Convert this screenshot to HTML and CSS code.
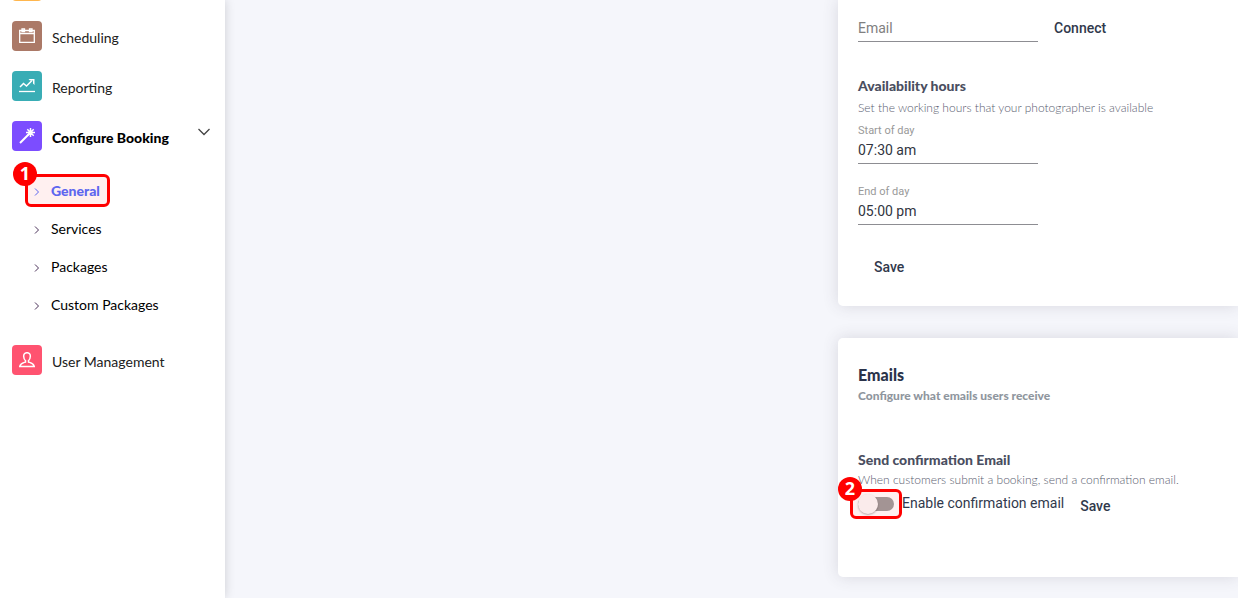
FILE: index.html
```html
<!DOCTYPE html>
<html lang="en">
<head>
<meta charset="utf-8">
<title>Configure Booking</title>
<link rel="stylesheet" href="styles.css">
</head>
<body>
<div class="app">
  <nav class="sidebar">
    <div class="nav-row"><span class="tile tile-orange"></span></div>
    <a class="nav-row" href="#">
      <span class="tile tile-brown">
        <svg viewBox="0 0 16 16"><path d="M.7 2.500h14.600v11.800H.7zM.7 5.500h14.600"/><path d="M3 1h2.500v2.500H3zM10.500 1H13v2.500h-2.500z"/></svg>
      </span>
      <span class="nav-label">Scheduling</span>
    </a>
    <a class="nav-row" href="#">
      <span class="tile tile-teal">
        <svg viewBox="0 0 16 16"><path class="thick" d="M1 9l3.500-3.500 3 2.500L13 2.500"/><path d="M0 13.500h16"/><path class="solid" d="M9.500 1h6v6l-1.500-1.500v-3h-3z"/></svg>
      </span>
      <span class="nav-label">Reporting</span>
    </a>
    <a class="nav-row" href="#">
      <span class="tile tile-violet">
        <svg viewBox="0 0 16 16"><path class="wand" d="M1 15L10.500 5.500"/><path class="thick" d="M11.500 0v9M7 4.500h9M8.300 1.300l6.400 6.400M14.700 1.300L8.300 7.700"/></svg>
      </span>
      <span class="nav-label nav-label-active">Configure Booking</span>
      <svg class="chevron" viewBox="0 0 12 8"><path d="M.5 1L6 6.500 11.500 1"/></svg>
    </a>
    <div class="submenu">
      <a class="sub-row sub-row-active" href="#">
        <svg class="arrow" viewBox="0 0 6 8"><path d="M1 .5L4.500 4 1 7.500"/></svg><span>General</span>
        <span class="callout callout-general"><span class="badge">1</span></span>
      </a>
      <a class="sub-row" href="#"><svg class="arrow" viewBox="0 0 6 8"><path d="M1 .5L4.500 4 1 7.500"/></svg><span>Services</span></a>
      <a class="sub-row" href="#"><svg class="arrow" viewBox="0 0 6 8"><path d="M1 .5L4.500 4 1 7.500"/></svg><span>Packages</span></a>
      <a class="sub-row" href="#"><svg class="arrow" viewBox="0 0 6 8"><path d="M1 .5L4.500 4 1 7.500"/></svg><span>Custom Packages</span></a>
    </div>
    <a class="nav-row" href="#">
      <span class="tile tile-pink">
        <svg viewBox="0 0 16 16"><path class="thick" d="M8 .7C5.800.7 4.500 2 4.700 4.500 4.800 6.500 5.500 8 6.500 8.600V10C4.500 10.800 1.500 11.200.7 14.500H15.300C14.500 11.200 11.500 10.800 9.500 10V8.600C10.500 8 11.200 6.500 11.300 4.500 11.500 2 10.200.7 8 .7z"/></svg>
      </span>
      <span class="nav-label">User Management</span>
    </a>
  </nav>
  <main class="content">
    <section class="card card-calendar">
      <form class="connect">
        <input class="field" type="email" placeholder="Email" aria-label="Email">
        <button class="button" type="button">Connect</button>
      </form>
      <h3 class="heading">Availability hours</h3>
      <p class="hint">Set the working hours that your photographer is available</p>
      <form class="hours">
        <div class="group">
          <label class="label" for="start">Start of day</label>
          <input class="field" id="start" type="text" value="07:30 am">
        </div>
        <div class="group">
          <label class="label" for="end">End of day</label>
          <input class="field" id="end" type="text" value="05:00 pm">
        </div>
        <button class="button" type="button">Save</button>
      </form>
    </section>
    <section class="card card-emails">
      <h2 class="title">Emails</h2>
      <p class="subtitle">Configure what emails users receive</p>
      <h3 class="heading">Send confirmation Email</h3>
      <p class="hint">When customers submit a booking, send a confirmation email.</p>
      <div class="setting">
        <span class="switch-wrap">
          <input class="switch" id="confirm" type="checkbox">
          <span class="callout callout-switch"><span class="badge">2</span></span>
        </span>
        <label class="switch-label" for="confirm">Enable confirmation email</label>
        <button class="button" type="button">Save</button>
      </div>
    </section>
  </main>
</div>
</body>
</html>
```
FILE: styles.css
```css
* { box-sizing: border-box; }
body {
  margin: 0;
  background: #f5f6fb;
  font-family: Lato, "Liberation Sans", sans-serif;
  overflow: hidden;
}
h2, h3, p { margin: 0; }
.app { display: flex; height: 100vh; overflow: hidden; }

.sidebar {
  flex: 0 0 225px;
  background: #fff;
  box-shadow: 0 0 10px rgba(0, 0, 0, 0.16);
}
.sidebar > :first-child { margin-top: -39px; }
.nav-row {
  display: flex;
  align-items: center;
  height: 50px;
  padding: 0 15px 0 12px;
  color: #212121;
  font-size: 14px;
  text-decoration: none;
}
.tile {
  display: grid;
  place-items: center;
  width: 30px;
  height: 30px;
  border-radius: 4px;
}
.tile svg { width: 16px; height: 16px; fill: none; stroke: #fff; stroke-width: 1.300; }
.tile .thick { stroke-width: 1.500; }
.tile .wand { stroke-width: 2; }
.tile .solid { fill: #fff; stroke: none; }
.tile-orange { background: #ffb64d; }
.tile-brown { background: #ab7967; }
.tile-teal { background: #39adb5; }
.tile-violet { background: #7c4dff; }
.tile-pink { background: #ff5370; }
.nav-label { flex: 1; padding: 2px 0 0 10px; }
.nav-label-active { color: #000; font-weight: 900; }
.chevron { width: 12px; height: 8px; margin-bottom: 8px; fill: none; stroke: #444; stroke-width: 1.300; }

.submenu { padding: 11px 0; }
.sub-row {
  position: relative;
  display: flex;
  align-items: center;
  gap: 11px;
  height: 38px;
  padding-left: 34px;
  color: #000;
  font-size: 14px;
  text-decoration: none;
}
.sub-row > span:not(.callout) { padding-bottom: 1px; }
.sub-row-active { color: #536dfe; font-weight: 900; }
.arrow { width: 6px; height: 8px; margin-top: 2px; fill: none; stroke: #4a3058; }
.sub-row-active .arrow { stroke: #536dfe; }

.callout {
  position: absolute;
  border: 3px solid #f00;
  border-radius: 6px;
  background: rgba(255, 0, 0, 0.06);
  pointer-events: none;
}
.callout-general { left: 25px; top: 2px; width: 85px; height: 33px; }
.callout-switch { left: -8px; top: -5px; width: 52px; height: 30px; }
.badge {
  position: absolute;
  left: -15px;
  top: -15px;
  width: 24px;
  height: 24px;
  border-radius: 50%;
  background: #f00;
  color: #fff;
  font: 700 18px/23px "Open Sans", sans-serif;
  text-align: center;
}

.content {
  flex: 1;
  display: flex;
  flex-direction: column;
  align-items: flex-end;
  gap: 32px;
}
.card {
  width: 400px;
  padding: 16px 20px;
  border-radius: 5px 0 0 5px;
  background: #fff;
  box-shadow: 0 0 16px rgba(69, 65, 78, 0.16);
}
.card-calendar { padding-bottom: 27px; border-top-left-radius: 0; }
.card-emails { padding: 27px 20px 59px; }
.connect { display: flex; align-items: flex-start; margin-bottom: 34px; }
.field {
  display: block;
  width: 180px;
  height: 26px;
  padding: 0 0 2px;
  border: 0;
  border-bottom: 1px solid #8d8d92;
  outline: 0;
  background: none;
  color: #31353f;
  font: 400 14px Roboto, sans-serif;
}
.field::placeholder { color: #808080; opacity: 1; }
.button {
  padding: 0 16px;
  border: 0;
  background: none;
  color: #31394c;
  font: 500 14px/24px Roboto, sans-serif;
}
.heading { color: #4a4e60; font-size: 14px; line-height: 20px; font-weight: 900; }
.hint { color: #5a5e70; font-size: 12px; line-height: 20px; font-weight: 300; white-space: nowrap; }
.card-calendar .hint { padding-top: 2px; }
.hours { padding-top: 6px; }
.group { margin-bottom: 21px; }
.label { display: block; color: #999; font: 400 11px/14px Roboto, sans-serif; }
.hours .button { display: block; margin-top: 30px; }
.title { margin-bottom: 1px; color: #2b334a; font-size: 16px; line-height: 20px; font-weight: 900; }
.subtitle { margin-bottom: 44px; color: #8f969e; font-size: 12px; line-height: 20px; font-weight: 900; }
.setting { display: flex; align-items: flex-start; padding-top: 4px; }
.switch-wrap { position: relative; display: flex; margin-right: 8px; }
.switch {
  appearance: none;
  display: flex;
  align-items: center;
  position: relative;
  width: 36px;
  height: 20px;
  margin: 0;
}
.switch::before {
  content: "";
  width: 36px;
  height: 14px;
  border-radius: 7px;
  background: #9e9e9e;
}
.switch::after {
  content: "";
  position: absolute;
  left: 0;
  top: 0;
  width: 20px;
  height: 20px;
  border-radius: 50%;
  background: #fafafa;
  box-shadow: 0 1px 2px rgba(0, 0, 0, 0.3);
}
.switch-label { color: #31394c; font: 400 14px/18px Roboto, sans-serif; white-space: nowrap; }
```
